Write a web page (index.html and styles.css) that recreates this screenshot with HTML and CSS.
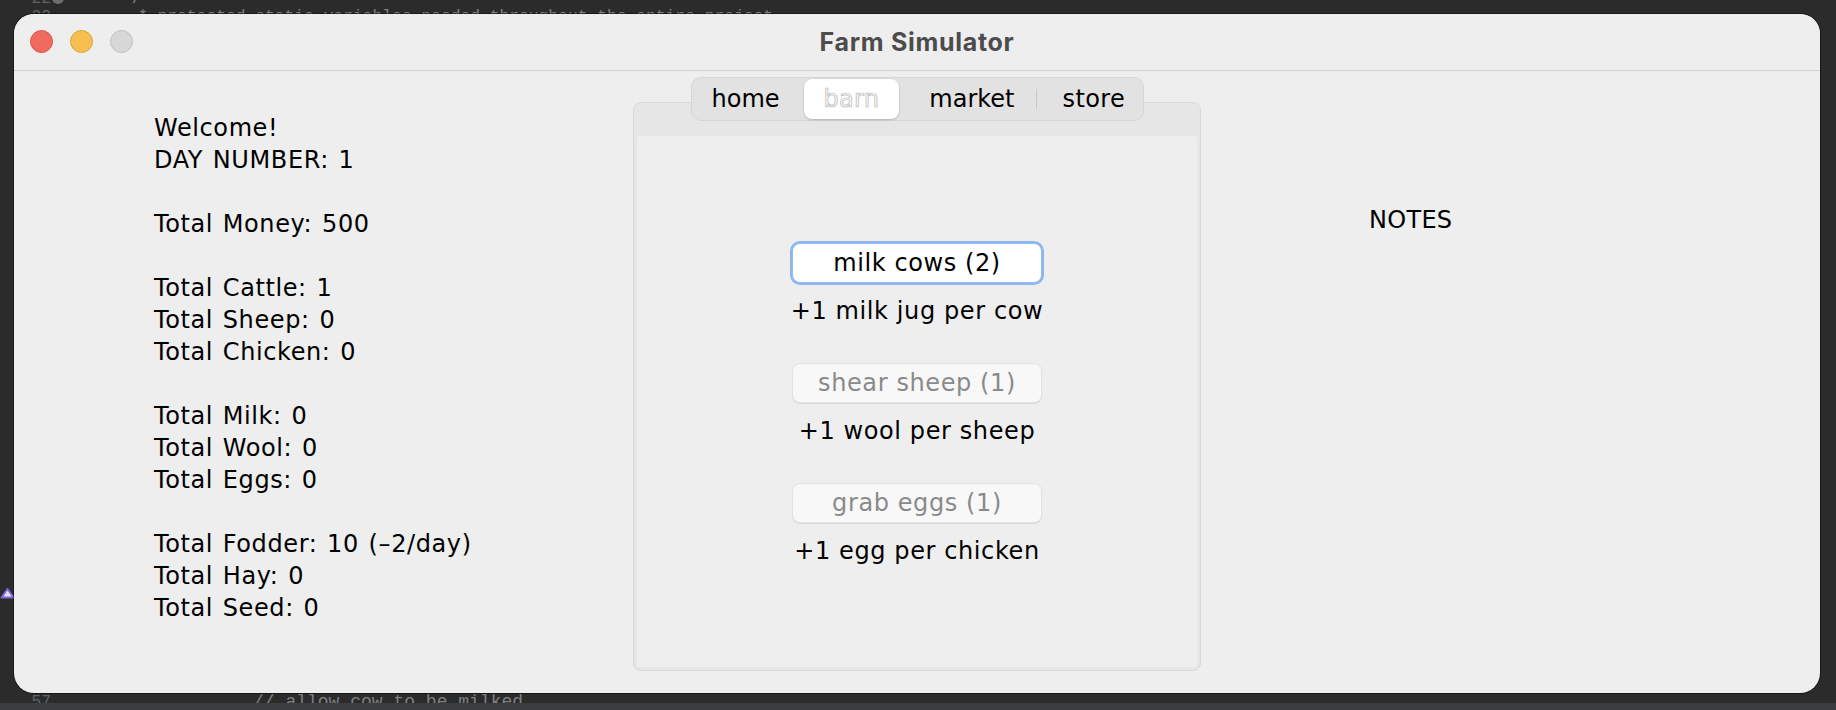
FILE: index.html
```html
<!DOCTYPE html>
<html lang="en">
<head>
<meta charset="utf-8">
<title>Farm Simulator</title>
<link rel="stylesheet" href="styles.css">
</head>
<body>
<div class="desktop">
  <div class="editor">
    <div class="code-line line-22"><span class="ln">22</span><span class="fold"></span><span class="code code-close">*/</span></div>
    <div class="code-line line-23"><span class="ln">23</span><span class="code code-doc">* protected static variables needed throughout the entire project</span></div>
    <div class="code-line line-57"><span class="ln">57</span><span class="code code-comment">// allow cow to be milked</span></div>
    <svg class="gutter-mark" width="15" height="12" viewBox="0 0 15 12"><polygon points="1.5,10.5 7.5,2 13.5,10.5" fill="#e4ddfb" stroke="#7d67d6" stroke-width="2" stroke-linejoin="round"/></svg>
    <div class="statusbar"></div>
  </div>

  <div class="window">
    <div class="titlebar">
      <div class="lights">
        <span class="light light-red"></span>
        <span class="light light-yellow"></span>
        <span class="light light-gray"></span>
      </div>
      <div class="title">Farm Simulator</div>
      <div></div>
    </div>

    <div class="content">
      <div class="stats">
        <div class="group">
          <div>Welcome!</div>
          <div>DAY NUMBER: 1</div>
        </div>
        <div class="group">
          <div>Total Money: 500</div>
        </div>
        <div class="group">
          <div>Total Cattle: 1</div>
          <div>Total Sheep: 0</div>
          <div>Total Chicken: 0</div>
        </div>
        <div class="group">
          <div>Total Milk: 0</div>
          <div>Total Wool: 0</div>
          <div>Total Eggs: 0</div>
        </div>
        <div class="group">
          <div>Total Fodder: 10 (–2/day)</div>
          <div>Total Hay: 0</div>
          <div>Total Seed: 0</div>
        </div>
      </div>

      <div class="center">
        <div class="tabs">
          <span class="tab tab-home">home</span>
          <span class="tab tab-barn tab-selected">barn</span>
          <span class="tab tab-market">market</span>
          <span class="tab-div"></span>
          <span class="tab tab-store">store</span>
        </div>
        <div class="panel">
          <div class="panel-inner">
            <div class="action">
              <button class="btn btn-focus">milk cows (2)</button>
              <div class="action-label">+1 milk jug per cow</div>
            </div>
            <div class="action">
              <button class="btn btn-disabled">shear sheep (1)</button>
              <div class="action-label">+1 wool per sheep</div>
            </div>
            <div class="action">
              <button class="btn btn-disabled">grab eggs (1)</button>
              <div class="action-label">+1 egg per chicken</div>
            </div>
          </div>
        </div>
      </div>

      <div class="notes">NOTES</div>
    </div>
  </div>
</div>
</body>
</html>
```

FILE: styles.css
```css
* { box-sizing: border-box; }

html, body {
  margin: 0;
  padding: 0;
}

body {
  width: 1836px;
  height: 710px;
  overflow: hidden;
  background: #2b2b2b;
  font-family: "DejaVu Sans", sans-serif;
}

.desktop {
  position: relative;
  width: 1836px;
  height: 710px;
  overflow: hidden;
  background: #2b2b2b;
}

/* background code editor */
.editor {
  position: absolute;
  inset: 0;
  font-family: "Liberation Mono", monospace;
  font-size: 16.3px;
  color: #7f8286;
}

.code-line {
  position: absolute;
  left: 0;
  right: 0;
  height: 20px;
  line-height: 20px;
  white-space: pre;
}

.line-22 { top: -11px; }
.line-23 { top: 7px; }
.line-57 { top: 692px; }

.ln {
  position: absolute;
  left: 0;
  width: 51px;
  text-align: right;
  color: #5f6366;
}

.fold {
  position: absolute;
  left: 52px;
  top: 3px;
  width: 12px;
  height: 12px;
  border-radius: 50%;
  background: #6b6e70;
}

.code {
  position: absolute;
}

.code-close { left: 122px; }
.code-doc { left: 138px; }
.code-comment {
  left: 253px;
  color: #808080;
  font-size: 18px;
}

.gutter-mark {
  position: absolute;
  left: 0;
  top: 587px;
}

.statusbar {
  position: absolute;
  left: 0;
  right: 0;
  bottom: 0;
  height: 7px;
  background: #3b3e40;
}

/* the app window */
.window {
  position: absolute;
  left: 14px;
  top: 14px;
  width: 1806px;
  height: 679px;
  border-radius: 20px;
  overflow: hidden;
  background: #eeeeee;
  box-shadow: 0 0 0 1px rgba(0, 0, 0, 0.45);
  display: flex;
  flex-direction: column;
}

.titlebar {
  height: 57px;
  flex: none;
  display: grid;
  grid-template-columns: 1fr auto 1fr;
  align-items: center;
  border-bottom: 1px solid #d2d2d2;
  background: #eeeeee;
}

.lights {
  display: flex;
  gap: 17px;
  padding-left: 16px;
  padding-bottom: 1px;
}

.light {
  width: 23px;
  height: 23px;
  border-radius: 50%;
  display: block;
}

.light-red { background: #ef6b5f; border: 1px solid #d8554a; }
.light-yellow { background: #f6bf50; border: 1px solid #d9a33a; }
.light-gray { background: #d7d7d7; border: 1px solid #c1c1c1; }

.title {
  font-family: "Inter", "Liberation Sans", sans-serif;
  font-weight: 700;
  font-size: 25px;
  letter-spacing: 0.7px;
  color: #4c4c4c;
  padding-bottom: 1px;
}

.content {
  flex: 1;
  display: grid;
  grid-template-columns: 619px 568px 1fr;
  font-size: 24px;
  line-height: 32px;
  color: #000;
  letter-spacing: 0.6px;
}

.stats {
  padding: 41px 0 0 140px;
  word-spacing: 1.5px;
}

.group {
  margin-bottom: 32px;
}

.center {
  display: flex;
  flex-direction: column;
  padding: 6px 0 22px;
}

.tabs {
  position: relative;
  z-index: 1;
  align-self: center;
  width: 453px;
  height: 44px;
  display: flex;
  align-items: center;
  padding: 0 1px;
  background: #e2e2e2;
  border: 1px solid #d6d6d6;
  border-radius: 10px;
  line-height: 40px;
  letter-spacing: 0;
}

.tab {
  height: 40px;
  color: #000;
}

.tab-home { padding: 0 24px 0 19px; }
.tab-barn { padding: 0 20px; }
.tab-market { padding: 0 21px 0 30px; }
.tab-store { padding: 0 14px 0 26px; letter-spacing: 0.4px; }

.tab-selected {
  background: #ffffff;
  border-radius: 8px;
  box-shadow: 0 1px 2px rgba(0, 0, 0, 0.18), 0 0 0 0.5px rgba(0, 0, 0, 0.06);
  color: #fbfbfb;
  -webkit-text-stroke: 0.7px #b4b4b4;
  letter-spacing: 0.3px;
}

.tab-div {
  width: 1px;
  height: 20px;
  background: #c9c9c9;
}

.panel {
  flex: 1;
  margin-top: -19px;
  border: 1px solid #d9d9d9;
  border-radius: 8px;
  background: #e6e6e6;
  padding: 33px 3px 3px;
  display: flex;
}

.panel-inner {
  flex: 1;
  background: #eeeeee;
  border-radius: 2px;
  display: flex;
  flex-direction: column;
  align-items: center;
  padding-top: 107px;
}

.action {
  display: flex;
  flex-direction: column;
  align-items: center;
  margin-bottom: 36px;
}

.btn {
  width: 250px;
  height: 40px;
  border-radius: 8px;
  font-family: "DejaVu Sans", sans-serif;
  font-size: 24px;
  letter-spacing: 0.6px;
  line-height: 38px;
  padding: 0;
  margin-bottom: 12px;
}

.btn-focus {
  background: #ffffff;
  color: #000;
  border: 1px solid #93bdf2;
  box-shadow: 0 0 0 2px #8bb6f0;
}

.btn-disabled {
  background: #f8f8f8;
  color: #8a8a8a;
  border: 1px solid #e2e2e2;
  box-shadow: 0 1px 1px rgba(0, 0, 0, 0.08);
}

.action-label {
  height: 32px;
}

.notes {
  padding: 133px 0 0 168px;
  letter-spacing: 0.3px;
}
```
